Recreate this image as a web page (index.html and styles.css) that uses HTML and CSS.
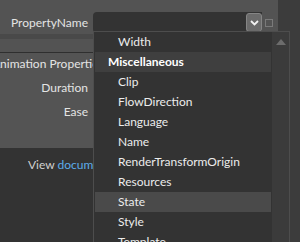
FILE: index.html
```html
<!DOCTYPE html>
<html lang="en">
<head>
  <meta charset="UTF-8" />
  <title>Property Picker</title>
  <link rel="stylesheet" href="styles.css">
</head>
<body>

  <div class="screen">
    <!-- Left editor panel -->
    <div class="editor">
      <div class="top-area">
        <div class="row row-cut">
          <span class="label">Orientation</span>
          <span class="check"></span>
        </div>
        <div class="row row-prop">
          <span class="label">PropertyName</span>
          <div class="combo">
            <div class="combo-field"></div>
            <div class="combo-btn">
              <svg width="9" height="6" viewBox="0 0 9 6">
                <path d="M1 1 L4.5 4.5 L8 1" fill="none" stroke="#f2f2f2" stroke-width="1.8"/>
              </svg>
            </div>
          </div>
          <span class="check small"></span>
        </div>
        <div class="band"></div>
        <div class="spacer"></div>
      </div>

      <div class="anim">
        <div class="anim-title"><span>Animation Properties</span></div>
        <div class="row row-field">
          <span class="label">Duration</span>
        </div>
        <div class="row row-field">
          <span class="label">Ease</span>
        </div>
      </div>

      <div class="docs">
        <span class="view">View</span> <a class="doc-link">documentation</a>
      </div>
    </div>

    <div class="sidebar"></div>

    <!-- Dropdown list, open over the panel -->
    <div class="popup">
      <div class="popup-list">
        <div class="item">Width</div>
        <div class="group">Miscellaneous</div>
        <div class="item">Clip</div>
        <div class="item">FlowDirection</div>
        <div class="item">Language</div>
        <div class="item">Name</div>
        <div class="item">RenderTransformOrigin</div>
        <div class="item">Resources</div>
        <div class="item selected">State</div>
        <div class="item">Style</div>
        <div class="item">Template</div>
      </div>
      <div class="scrollbar">
        <span class="arrow-up"></span>
      </div>
    </div>
  </div>

</body>
</html>
```

FILE: styles.css
```css
body {
  margin: 0;
  padding: 0;
  font-family: 'Lato', 'Open Sans', sans-serif;
  font-size: 12px;
  background-color: #3b3b3b;
}

.screen {
  position: relative;
  display: flex;
  width: 300px;
  height: 242px;
  overflow: hidden;
}

.editor {
  width: 278px;
  display: flex;
  flex-direction: column;
  background-color: #333333;
}

.sidebar {
  flex: 1;
  background-color: #3c3c3c;
}

.top-area {
  background-color: #535353;
}

.row {
  display: flex;
  align-items: center;
}

.label {
  width: 88px;
  flex-shrink: 0;
  text-align: right;
  color: #e4e4e4;
  white-space: nowrap;
}

.row-cut {
  height: 20px;
  margin-top: -17px;
}

.check {
  width: 9px;
  height: 9px;
  border: 1px solid #7a7a7a;
  margin-left: 6px;
}

.check.small {
  width: 6px;
  height: 6px;
  margin-left: 3px;
}

.row-prop {
  height: 23px;
  margin-top: 8px;
}

.combo {
  display: flex;
  margin-left: 5px;
  width: 169px;
  height: 21px;
  background-color: #333333;
  border-radius: 4px 0 0 4px;
}

.combo-field {
  flex: 1;
}

.combo-btn {
  width: 14px;
  margin: 1px 0;
  background-color: #6b6b6b;
  border: 1px solid #858585;
  border-radius: 3px;
  display: flex;
  align-items: center;
  justify-content: center;
}

.band {
  height: 5px;
  background-color: #494949;
}

.spacer {
  height: 13px;
  border-bottom: 1px solid #2f2f2f;
}

.anim {
  height: 95px;
  background-color: #545454;
}

.anim-title {
  width: 93px;
  height: 22px;
  line-height: 22px;
  overflow: hidden;
  color: #e4e4e4;
  white-space: nowrap;
}

.anim-title span {
  display: inline-block;
  margin-left: -8px;
}

.row-field {
  height: 24px;
}

.docs {
  width: 65px;
  overflow: hidden;
  padding: 9px 0 0 28px;
  color: #d0d0d0;
  white-space: nowrap;
}

.doc-link {
  color: #5dadea;
}

.popup {
  position: absolute;
  left: 93px;
  top: 31px;
  width: 195px;
  height: 220px;
  display: flex;
  background-color: #333333;
  border: 1px solid #4d4d4d;
  border-bottom: none;
}

.popup-list {
  flex: 1;
  padding: 0 1px;
}

.item,
.group {
  height: 20px;
  line-height: 20px;
  color: #ececec;
  padding-left: 23px;
  white-space: nowrap;
}

.group {
  padding-left: 13px;
  font-weight: bold;
  color: #ffffff;
  background-color: #3f3f3f;
}

.item.selected {
  background-color: #4a4a4a;
}

.scrollbar {
  width: 17px;
  background-color: #3b3b3b;
  display: flex;
  justify-content: center;
  padding-top: 7px;
}

.arrow-up {
  width: 0;
  height: 0;
  border-left: 5px solid transparent;
  border-right: 5px solid transparent;
  border-bottom: 6px solid #6c6c6c;
}
```
